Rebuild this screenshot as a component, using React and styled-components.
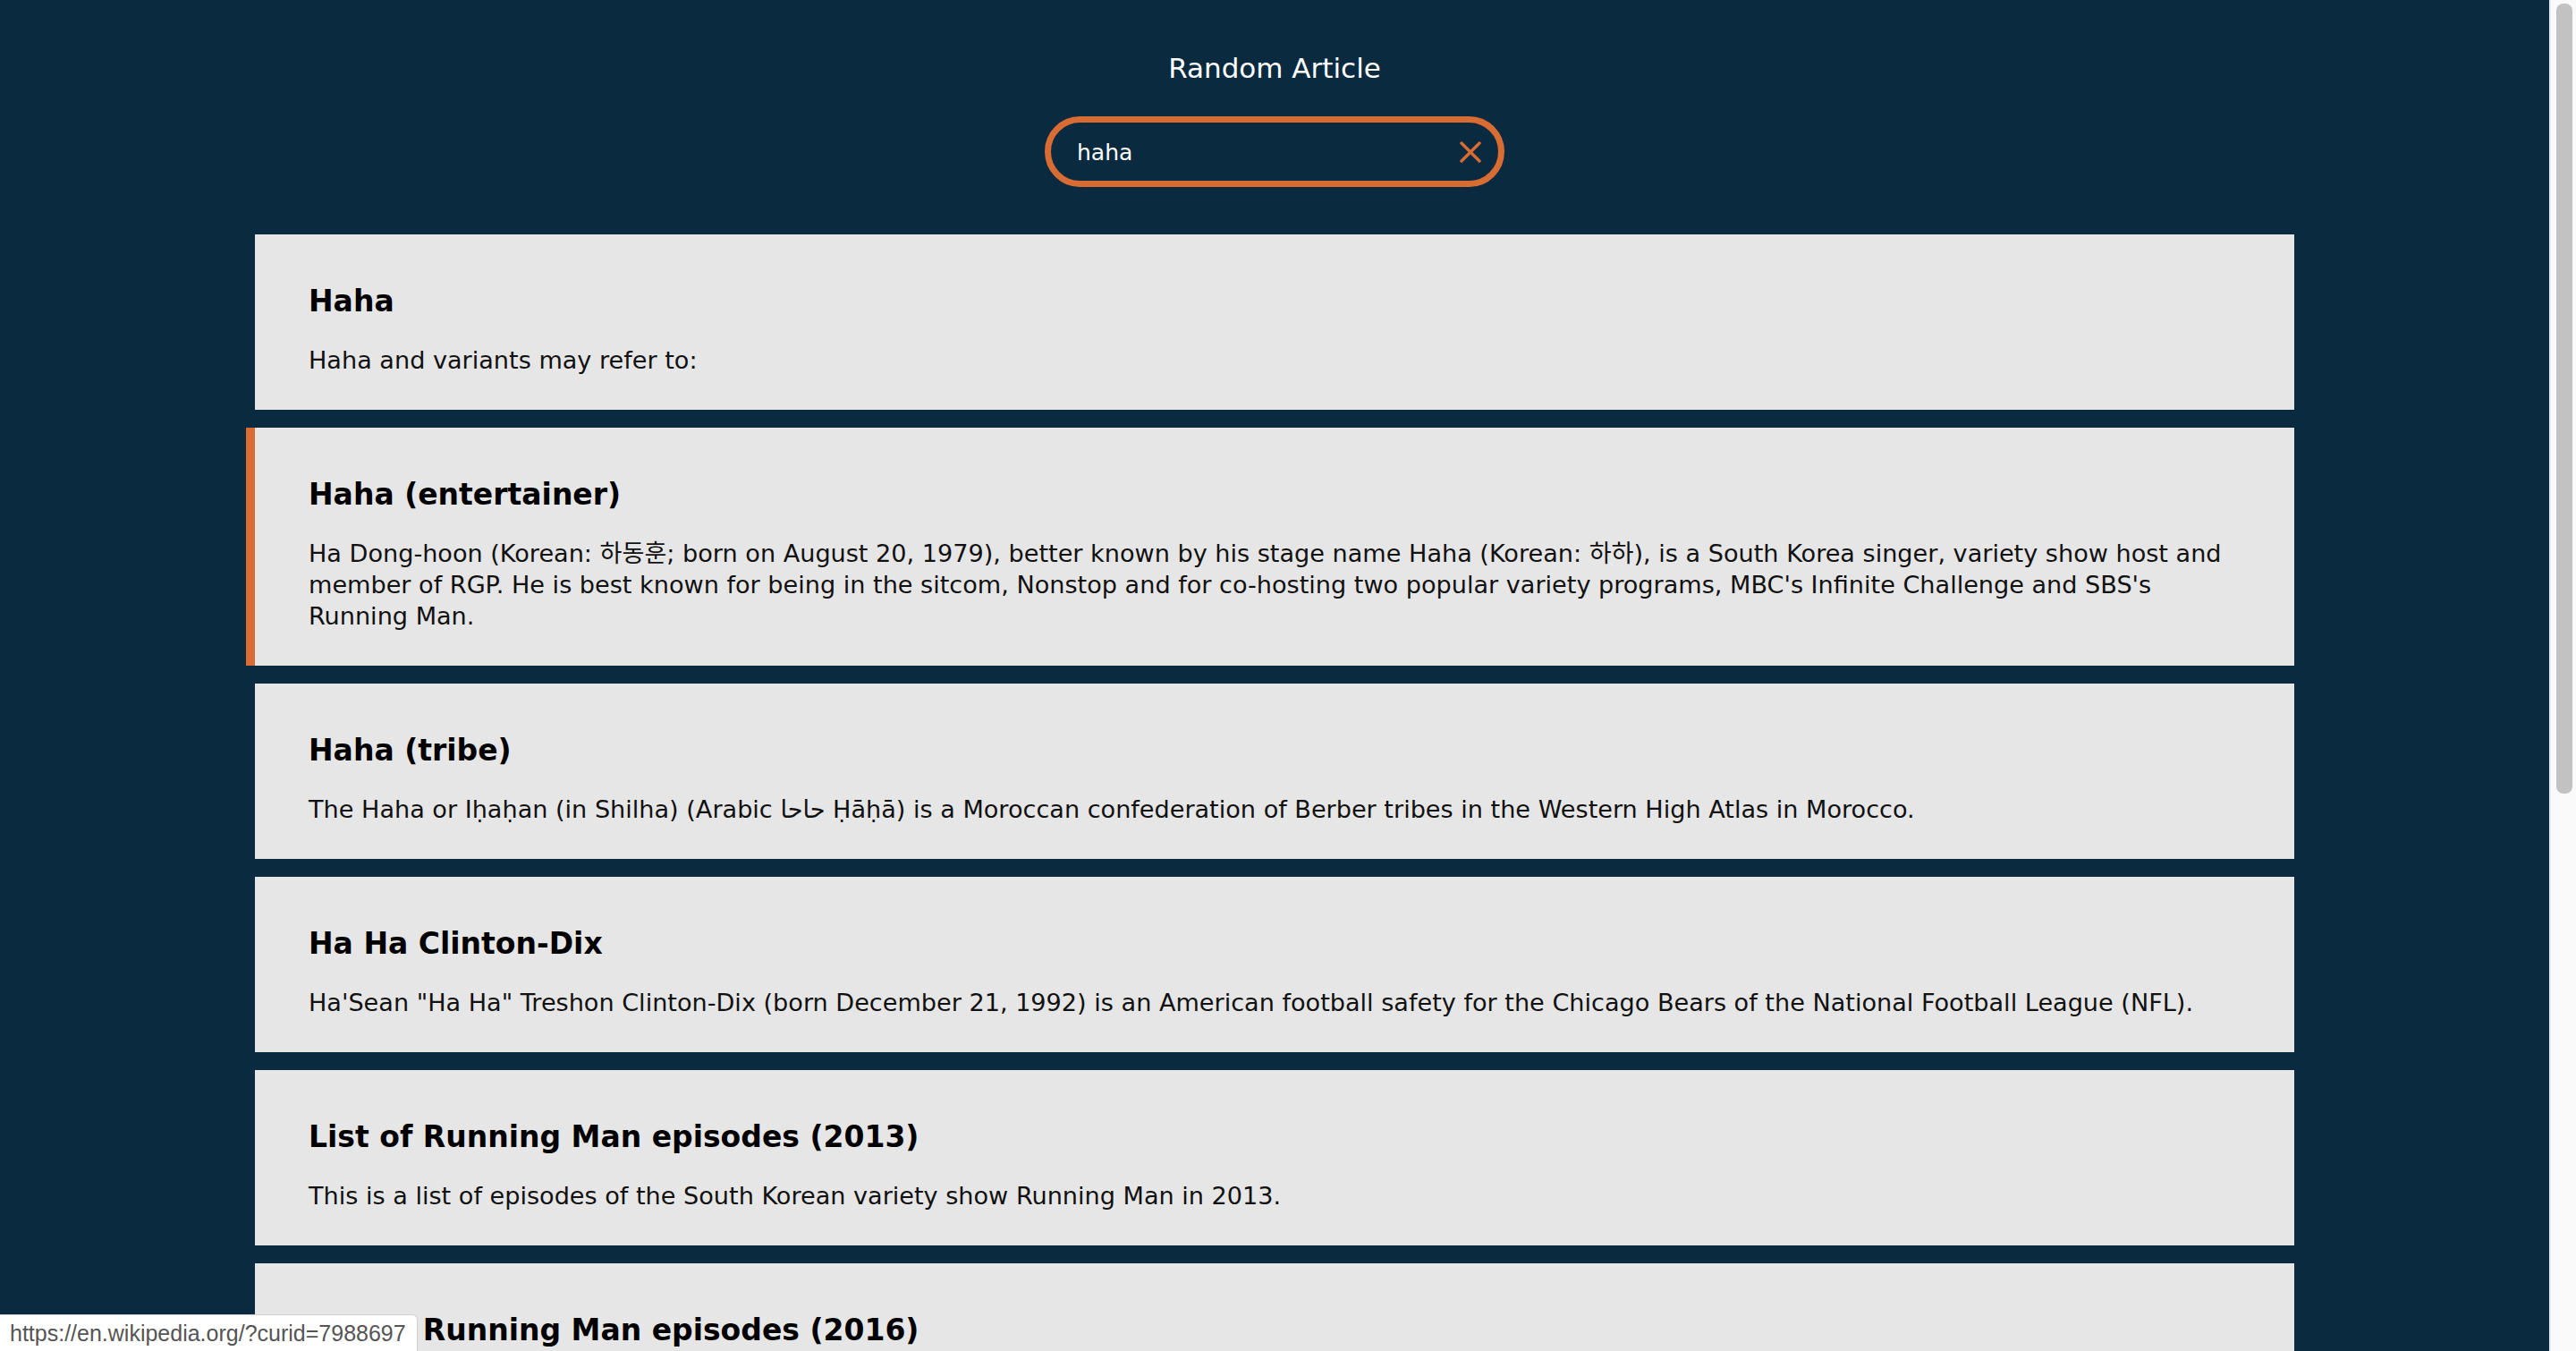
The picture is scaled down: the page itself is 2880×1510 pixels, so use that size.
import React from "react";
import styled, { createGlobalStyle, css } from "styled-components";

const ORANGE = "#d96c33";
const NAVY = "#0a2a40";

const GlobalStyle = createGlobalStyle`
  html, body {
    margin: 0;
    padding: 0;
    background: ${NAVY};
    overflow: hidden;
  }
  * {
    box-sizing: border-box;
  }
`;

const Page = styled.div`
  display: flex;
  height: 100vh;
  font-family: "DejaVu Sans", "Noto Sans CJK KR", sans-serif;
`;

const Main = styled.main`
  flex: 1;
  overflow: hidden;
  display: flex;
  flex-direction: column;
  align-items: center;
`;

const Header = styled.header`
  display: flex;
  flex-direction: column;
  align-items: center;
  padding-top: 58px;
`;

const RandomLink = styled.a`
  color: #ffffff;
  font-size: 31px;
  line-height: 36px;
  text-decoration: none;
  cursor: pointer;
`;

const SearchForm = styled.form`
  display: flex;
  align-items: center;
  width: 514px;
  height: 79px;
  margin-top: 36px;
  padding: 0 19px 0 29px;
  border: 7px solid ${ORANGE};
  border-radius: 40px;
`;

const SearchInput = styled.input`
  flex: 1;
  min-width: 0;
  background: transparent;
  border: none;
  outline: none;
  color: #ffffff;
  caret-color: #ffffff;
  font-family: "DejaVu Sans", sans-serif;
  font-size: 25px;
  padding: 2px 0 0;
`;

const ClearButton = styled.button`
  display: flex;
  padding: 0;
  background: none;
  border: none;
  cursor: pointer;
`;

const Results = styled.section`
  width: 80%;
  margin-top: 53px;
  display: flex;
  flex-direction: column;
  gap: 20px;
`;

const Card = styled.a`
  display: block;
  background: #e6e6e6;
  padding: 39px 55px 38px 60px;
  color: #111;
  text-decoration: none;
  ${(props) =>
    props.$active &&
    css`
      box-shadow: -10px 0 0 ${ORANGE};
    `}
`;

const CardTitle = styled.h2`
  margin: 15px 0 27px;
  font-size: 33px;
  line-height: 42px;
  font-weight: bold;
  color: #000;
`;

const CardText = styled.p`
  margin: 0;
  font-size: 27.1px;
  line-height: 35px;
`;

const Scrollbar = styled.div`
  width: 30px;
  flex-shrink: 0;
  background: #fafafa;
  border-left: 2px solid #ececec;
  padding: 4px 4px 0 6px;
`;

const Thumb = styled.div`
  height: 883px;
  border-radius: 8px;
  background: #c2c2c2;
`;

const StatusBubble = styled.div`
  position: fixed;
  left: 0;
  bottom: 0;
  height: 41px;
  padding: 0 12px 0 11px;
  display: flex;
  align-items: center;
  background: #ffffff;
  border-top: 1px solid #cfcfcf;
  border-right: 1px solid #cfcfcf;
  border-top-right-radius: 6px;
  color: #555;
  font-family: "Liberation Sans", Arial, sans-serif;
  font-size: 25px;
`;

const results = [
  { title: "Haha", text: "Haha and variants may refer to:" },
  {
    title: "Haha (entertainer)",
    text:
      "Ha Dong-hoon (Korean: 하동훈; born on August 20, 1979), better known by his stage name Haha (Korean: 하하), is a South Korea singer, variety show host and member of RGP. He is best known for being in the sitcom, Nonstop and for co-hosting two popular variety programs, MBC's Infinite Challenge and SBS's Running Man.",
    active: true,
  },
  {
    title: "Haha (tribe)",
    text:
      "The Haha or Iḥaḥan (in Shilha) (Arabic حاحا Ḥāḥā) is a Moroccan confederation of Berber tribes in the Western High Atlas in Morocco.",
  },
  {
    title: "Ha Ha Clinton-Dix",
    text:
      "Ha'Sean \"Ha Ha\" Treshon Clinton-Dix (born December 21, 1992) is an American football safety for the Chicago Bears of the National Football League (NFL).",
  },
  {
    title: "List of Running Man episodes (2013)",
    text:
      "This is a list of episodes of the South Korean variety show Running Man in 2013.",
  },
  {
    title: "List of Running Man episodes (2016)",
    text:
      "This is a list of episodes of the South Korean variety show Running Man in 2016.",
  },
];

const ClearIcon = () => (
  <svg width="24" height="24" viewBox="0 0 24 24">
    <path
      d="M2 2 L22 22 M22 2 L2 22"
      stroke={ORANGE}
      strokeWidth="3.4"
      strokeLinecap="round"
      fill="none"
    />
  </svg>
);

const App = () => {
  return (
    <Page>
      <GlobalStyle />
      <Main>
        <Header>
          <RandomLink href="#">Random Article</RandomLink>
          <SearchForm onSubmit={(e) => e.preventDefault()}>
            <SearchInput defaultValue="haha" autoFocus />
            <ClearButton type="button">
              <ClearIcon />
            </ClearButton>
          </SearchForm>
        </Header>
        <Results>
          {results.map((r) => (
            <Card key={r.title} $active={r.active}>
              <CardTitle>{r.title}</CardTitle>
              <CardText>{r.text}</CardText>
            </Card>
          ))}
        </Results>
      </Main>
      <Scrollbar>
        <Thumb />
      </Scrollbar>
      <StatusBubble>https://en.wikipedia.org/?curid=7988697</StatusBubble>
    </Page>
  );
};

export default App;
